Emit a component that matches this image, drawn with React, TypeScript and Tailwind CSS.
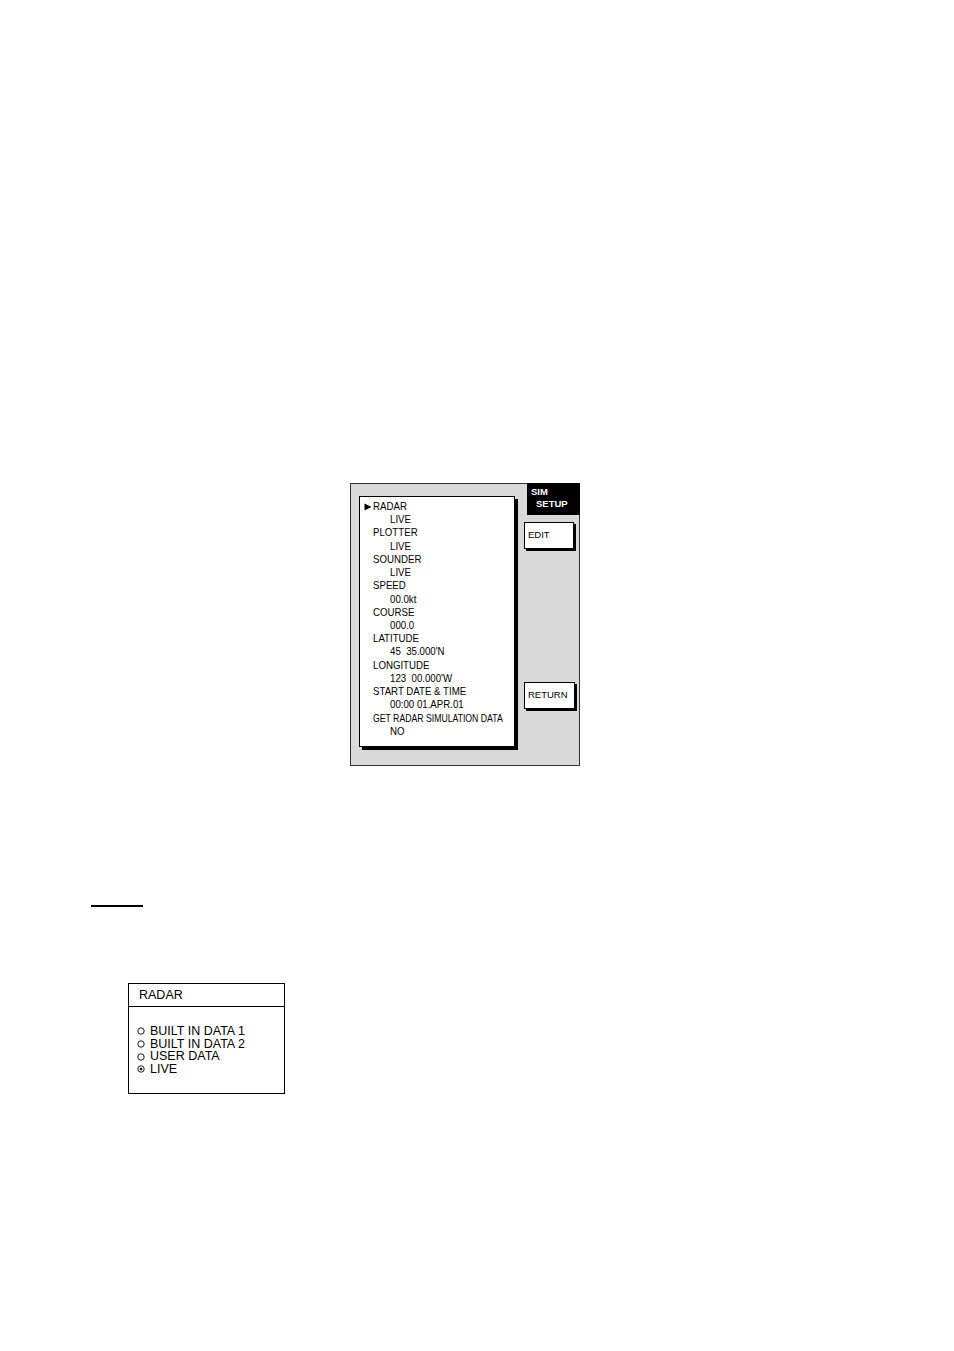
const rows: [string, string, boolean?][] = [
  ['RADAR', 'LIVE'],
  ['PLOTTER', 'LIVE'],
  ['SOUNDER', 'LIVE'],
  ['SPEED', '00.0kt'],
  ['COURSE', '000.0'],
  ['LATITUDE', '45  35.000\'N'],
  ['LONGITUDE', '123  00.000\'W'],
  ['START DATE & TIME', '00:00 01.APR.01'],
  ['GET RADAR SIMULATION DATA', 'NO', true],
];

const options = [
  { label: 'BUILT IN DATA 1', on: false },
  { label: 'BUILT IN DATA 2', on: false },
  { label: 'USER DATA', on: false },
  { label: 'LIVE', on: true },
];

function Radio({ on }: { on: boolean }) {
  return (
    <svg width="8" height="8" viewBox="0 0 8 8" className="shrink-0">
      <circle cx="4" cy="4" r="3.2" fill="none" stroke="#000" strokeWidth="0.9" />
      {on && <circle cx="4" cy="4" r="1.3" fill="#000" />}
    </svg>
  );
}

function MenuButton({ label, className }: { label: string; className?: string }) {
  return (
    <div
      className={`flex h-[27px] items-center border border-black bg-white pl-[3px] text-[9.5px] text-black shadow-[2px_2px_0_0_#000] ${className ?? ''}`}
    >
      {label}
    </div>
  );
}

// condensed look: the narrow face isn't installed, so squeeze the regular one
function Narrow({ children, className }: { children: React.ReactNode; className?: string }) {
  return (
    <span className={`inline-block origin-left scale-x-[0.82] whitespace-pre ${className ?? ''}`}>{children}</span>
  );
}

export default function App() {
  return (
    <div className="min-h-[1351px] w-[954px] bg-white text-black" style={{ fontFamily: '"Liberation Sans", Arial, sans-serif' }}>
      {/* sim setup menu */}
      <div className="pl-[350px] pt-[483px]">
        <div className="flex h-[283px] w-[230px] border border-[#333] bg-[#d9d9d9]">
          <div className="w-[173px] pl-[8px] pt-[12px]">
            <div className="h-[251px] w-[156px] border border-black bg-white pl-[4px] pt-[3px] text-[11.8px] leading-[13.23px] shadow-[3px_3px_0_0_#000]">
              {rows.map(([label, value, small], i) => (
                <div key={label}>
                  <div className="flex h-[13.23px] items-center">
                    <span className="flex w-[9px] shrink-0 items-center">
                      {i === 0 && (
                        <svg width="8" height="8" viewBox="0 0 8 8">
                          <polygon points="0.5,0.5 7.5,4 0.5,7.5" fill="#000" />
                        </svg>
                      )}
                    </span>
                    <Narrow className={small ? 'text-[10.6px]' : ''}>{label}</Narrow>
                  </div>
                  <div className="h-[13.23px] pl-[26px]">
                    <Narrow>{value}</Narrow>
                  </div>
                </div>
              ))}
            </div>
          </div>
          <div className="flex w-[55px] flex-col">
            <div className="-mr-px -mt-px ml-[3px] h-[32px] bg-black pl-[4px] pt-[3px] text-[9.5px] font-bold leading-[12px] text-white">
              <div>SIM</div>
              <div className="pl-[5px]">SETUP</div>
            </div>
            <MenuButton label="EDIT" className="mt-[7px] w-[50px]" />
            <MenuButton label="RETURN" className="mt-[133px] w-[51px]" />
          </div>
        </div>
      </div>

      {/* note heading rule */}
      <div className="ml-[91px] mt-[139px] h-[2px] w-[52px] bg-black" />

      {/* radar window */}
      <div className="ml-[128px] mt-[76px] h-[111px] w-[157px] border border-black text-[12.5px]">
        <div className="flex h-[23px] items-center border-b border-black pl-[10px]">RADAR</div>
        <div className="pl-[8px] pt-[18px] leading-[12.67px]">
          {options.map((o) => (
            <div key={o.label} className="flex items-center gap-[5px]">
              <Radio on={o.on} />
              <span>{o.label}</span>
            </div>
          ))}
        </div>
      </div>
    </div>
  );
}
